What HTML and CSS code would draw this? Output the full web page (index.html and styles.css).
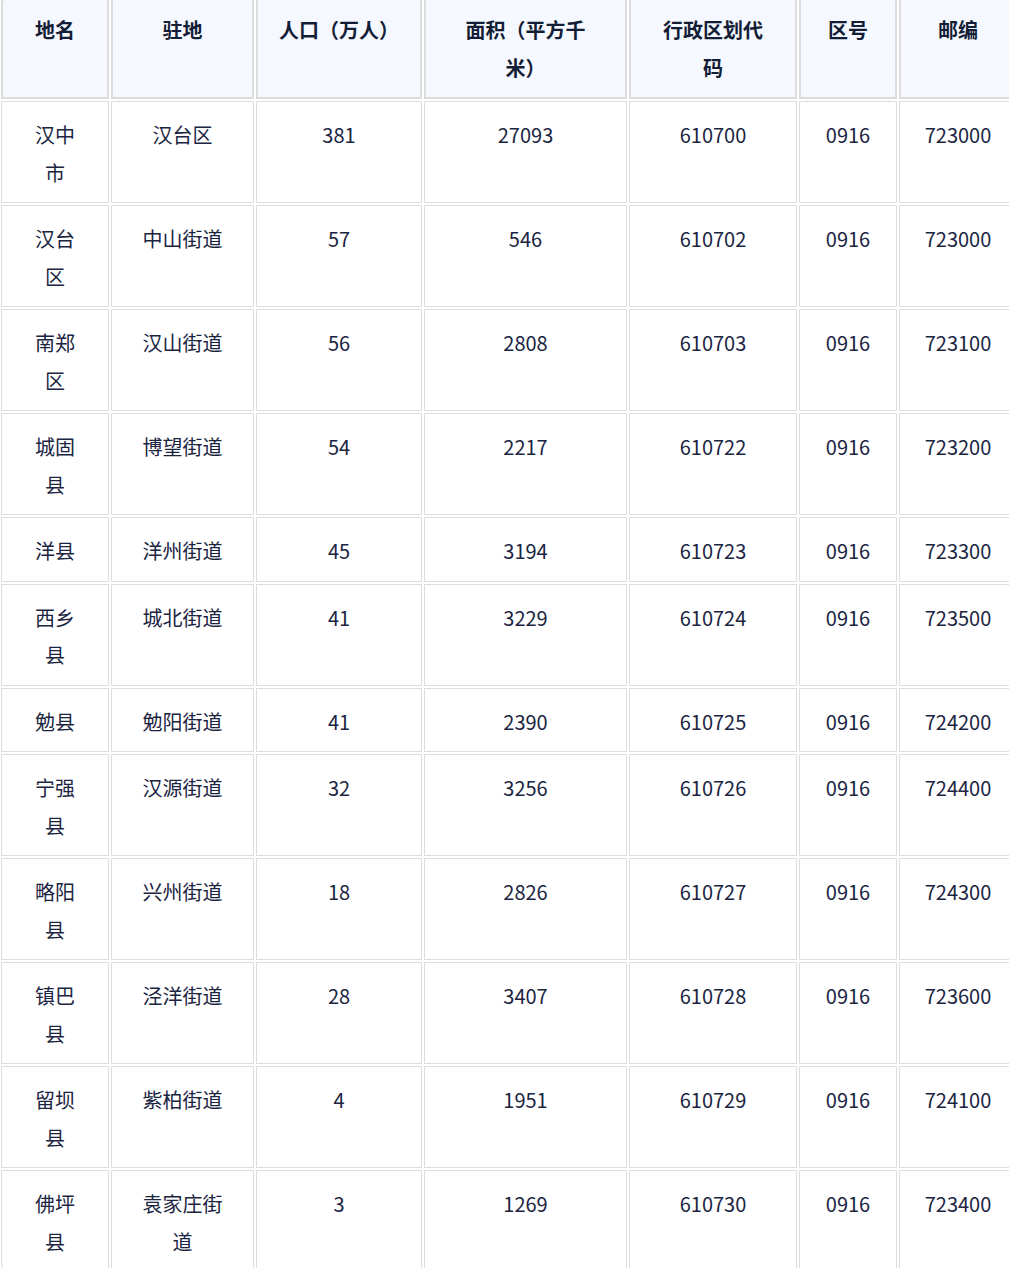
FILE: index.html
```html
<!DOCTYPE html>
<html lang="zh-CN">
<head>
<meta charset="utf-8">
<title>汉中市行政区划</title>
<link rel="stylesheet" href="styles.css">
</head>
<body>
<div class="wrap">
<table class="grid">
  <thead>
    <tr>
      <th class="c1">地名</th>
      <th class="c2">驻地</th>
      <th class="c3">人口（万人）</th>
      <th class="c4">面积（平方千米）</th>
      <th class="c5">行政区划代码</th>
      <th class="c6">区号</th>
      <th class="c7">邮编</th>
    </tr>
  </thead>
  <tbody>
    <tr><td class="c1">汉中市</td><td class="c2">汉台区</td><td class="c3">381</td><td class="c4">27093</td><td class="c5">610700</td><td class="c6">0916</td><td class="c7">723000</td></tr>
    <tr><td class="c1">汉台区</td><td class="c2">中山街道</td><td class="c3">57</td><td class="c4">546</td><td class="c5">610702</td><td class="c6">0916</td><td class="c7">723000</td></tr>
    <tr><td class="c1">南郑区</td><td class="c2">汉山街道</td><td class="c3">56</td><td class="c4">2808</td><td class="c5">610703</td><td class="c6">0916</td><td class="c7">723100</td></tr>
    <tr><td class="c1">城固县</td><td class="c2">博望街道</td><td class="c3">54</td><td class="c4">2217</td><td class="c5">610722</td><td class="c6">0916</td><td class="c7">723200</td></tr>
    <tr><td class="c1">洋县</td><td class="c2">洋州街道</td><td class="c3">45</td><td class="c4">3194</td><td class="c5">610723</td><td class="c6">0916</td><td class="c7">723300</td></tr>
    <tr><td class="c1">西乡县</td><td class="c2">城北街道</td><td class="c3">41</td><td class="c4">3229</td><td class="c5">610724</td><td class="c6">0916</td><td class="c7">723500</td></tr>
    <tr><td class="c1">勉县</td><td class="c2">勉阳街道</td><td class="c3">41</td><td class="c4">2390</td><td class="c5">610725</td><td class="c6">0916</td><td class="c7">724200</td></tr>
    <tr><td class="c1">宁强县</td><td class="c2">汉源街道</td><td class="c3">32</td><td class="c4">3256</td><td class="c5">610726</td><td class="c6">0916</td><td class="c7">724400</td></tr>
    <tr><td class="c1">略阳县</td><td class="c2">兴州街道</td><td class="c3">18</td><td class="c4">2826</td><td class="c5">610727</td><td class="c6">0916</td><td class="c7">724300</td></tr>
    <tr><td class="c1">镇巴县</td><td class="c2">泾洋街道</td><td class="c3">28</td><td class="c4">3407</td><td class="c5">610728</td><td class="c6">0916</td><td class="c7">723600</td></tr>
    <tr><td class="c1">留坝县</td><td class="c2">紫柏街道</td><td class="c3">4</td><td class="c4">1951</td><td class="c5">610729</td><td class="c6">0916</td><td class="c7">724100</td></tr>
    <tr><td class="c1">佛坪县</td><td class="c2">袁家庄街道</td><td class="c3">3</td><td class="c4">1269</td><td class="c5">610730</td><td class="c6">0916</td><td class="c7">723400</td></tr>
  </tbody>
</table>
</div>
</body>
</html>
```
FILE: styles.css
```css
html, body {
  margin: 0;
  padding: 0;
  overflow: hidden;
  background: #ffffff;
}

.wrap {
  width: 1009px;
  overflow: hidden;
}

.grid {
  border-collapse: separate;
  border-spacing: 2px;
  table-layout: fixed;
  width: 1020px;
  margin: -7px 0 0 -1px;
  font-family: "Noto Sans CJK SC", "Noto Sans", sans-serif;
  font-size: 20px;
  line-height: 37.5px;
  color: #1b2542;
}

.grid th,
.grid td {
  box-sizing: border-box;
  text-align: center;
  vertical-align: top;
  padding: 14px 16px 11px;
}

.grid th {
  background: #f5f8ff;
  border: 2px solid #dcdcdc;
  font-weight: 600;
  color: #141d36;
}

.grid td {
  background: #ffffff;
  border: 1px solid #dddddd;
  font-weight: 400;
}

.grid .c1 { width: 108px; padding-left: 28px; padding-right: 28px; }
.grid .c2 { width: 143px; padding-left: 28px; padding-right: 28px; }
.grid .c3 { width: 166px; }
.grid .c4 { width: 203px; padding-left: 34px; padding-right: 34px; }
.grid .c5 { width: 168px; padding-left: 28px; padding-right: 28px; }
.grid .c6 { width: 98px; }
.grid .c7 { width: 118px; }

.grid thead th:first-child { border-top-left-radius: 8px; }
.grid thead th:last-child { border-top-right-radius: 8px; }
.grid tbody tr:last-child td:first-child { border-bottom-left-radius: 8px; }
.grid tbody tr:last-child td:last-child { border-bottom-right-radius: 8px; }
```
